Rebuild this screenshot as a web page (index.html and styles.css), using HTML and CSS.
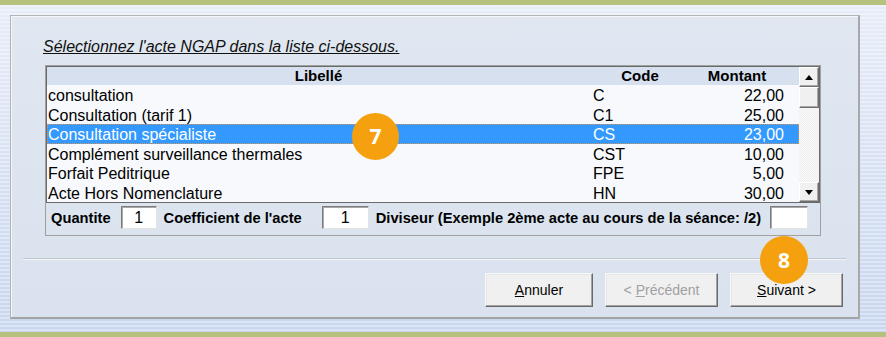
FILE: index.html
```html
<!DOCTYPE html>
<html lang="fr">
<head>
  <meta charset="UTF-8" />
  <title>Acte NGAP</title>
  <link rel="stylesheet" href="styles.css">
</head>
<body>
  <div class="band"></div>
  <div class="desktop">
    <div class="panel">
      <p class="intro">Sélectionnez l'acte NGAP dans la liste ci-dessous.</p>

      <div class="picker">
        <div class="list">
          <div class="grid">
            <div class="row head"><span>Libellé</span><span>Code</span><span>Montant</span><span></span></div>
            <div class="row"><span>consultation</span><span>C</span><span>22,00</span><span></span></div>
            <div class="row"><span>Consultation (tarif 1)</span><span>C1</span><span>25,00</span><span></span></div>
            <div class="row selected"><span>Consultation spécialiste</span><span>CS</span><span>23,00</span><span></span></div>
            <div class="row"><span>Complément surveillance thermales</span><span>CST</span><span>10,00</span><span></span></div>
            <div class="row"><span>Forfait Peditrique</span><span>FPE</span><span>5,00</span><span></span></div>
            <div class="row"><span>Acte Hors Nomenclature</span><span>HN</span><span>30,00</span><span></span></div>
          </div>
          <div class="scrollbar">
            <div class="sb-btn"><svg width="8" height="5" viewBox="0 0 8 5"><polygon points="4,0 8,5 0,5" fill="#000"/></svg></div>
            <div class="sb-btn thumb"></div>
            <div class="sb-track"></div>
            <div class="sb-btn"><svg width="8" height="5" viewBox="0 0 8 5"><polygon points="0,0 8,0 4,5" fill="#000"/></svg></div>
          </div>
        </div>
        <div class="params">
          <label class="lbl-qte">Quantite</label>
          <div class="field f-qte">1</div>
          <label class="lbl-coef">Coefficient de l'acte</label>
          <div class="field f-coef">1</div>
          <label class="lbl-div">Diviseur (Exemple 2ème acte au cours de la séance: /2)</label>
          <div class="field f-div"></div>
        </div>
      </div>

      <div class="sep"></div>

      <div class="buttons">
        <button class="btn btn-annuler"><u>A</u>nnuler</button>
        <button class="btn btn-prec" disabled>&lt; <u>P</u>récédent</button>
        <button class="btn btn-suiv"><u>S</u>uivant &gt;</button>
      </div>

      <span class="badge b7">7</span>
      <span class="badge b8">8</span>
    </div>
  </div>
  <div class="band"></div>
</body>
</html>
```

FILE: styles.css
```css
/* ---- fond et cadre ---- */
body {
  margin: 0;
  height: 337px;
  display: flex;
  flex-direction: column;
  overflow: hidden;
  font-family: 'Liberation Sans', Arial, sans-serif;
  color: #000;
}

.band {
  flex: none;
  height: 5px;
  background: #b7c17e;
}

.desktop {
  flex: 1;
  padding: 10px 26px 13px 10px;
  background:
    repeating-linear-gradient(180deg, rgba(255,255,255,0.35) 0 2px, rgba(255,255,255,0) 2px 4px),
    linear-gradient(#e6ecf8, #c8d6ef);
}

.panel {
  position: relative;
  height: 100%;
  box-sizing: border-box;
  border: 1px solid #b4b4b4;
  border-right: 2px solid #a8a8a8;
  border-bottom: 2px solid #a4a4a4;
  box-shadow: inset 1px 1px 0 #f4f6fa;
  background: linear-gradient(#e0e7f1, #d9e2ee);
  display: flex;
  flex-direction: column;
}

.intro {
  margin: 21px 0 0 32px;
  font-size: 16px;
  line-height: 19px;
  font-style: italic;
  text-decoration: underline;
  color: #111;
}

/* ---- liste ---- */
.picker {
  margin: 9px 0 0 34px;
  width: 776px;
  box-sizing: border-box;
  border: 1px solid #a0a0a0;
}

.list {
  display: flex;
  border: 1px solid #6a6a6a;
}

.grid {
  flex: 1;
  background: #f7f9fc;
}

.row {
  display: grid;
  grid-template-columns: 543px 100px 94px 1fr;
  height: 19.5px;
  line-height: 21px;
  font-size: 16px;
  white-space: nowrap;
}

.row span:nth-child(1) { padding-left: 1px; }
.row span:nth-child(2) { padding-left: 3px; }
.row span:nth-child(3) { text-align: right; }

.row.head {
  height: 18px;
  line-height: 18px;
  background: #d7e0ee;
  font-size: 15px;
  font-weight: bold;
}

.row.head span { text-align: center; padding: 0; }

.row.selected {
  background: #3399ff;
  color: #fff;
  outline: 1px dotted #d7955a;
  outline-offset: -1px;
}

.scrollbar {
  width: 20px;
  display: flex;
  flex-direction: column;
}

.sb-btn {
  height: 20px;
  box-sizing: border-box;
  background: #f0f0f0;
  border: 1px solid;
  border-color: #fff #6e6e6e #6e6e6e #fff;
  box-shadow: inset -1px -1px 0 #a8a8a8;
  display: flex;
  align-items: center;
  justify-content: center;
}

.sb-btn.thumb { height: 21px; }

.sb-track {
  flex: 1;
  background: repeating-conic-gradient(#ececec 0 25%, #fbfbfb 0 50%) 0 0 / 2px 2px;
}

/* ---- paramètres ---- */
.params {
  height: 32px;
  box-sizing: border-box;
  padding: 0 0 3px 5px;
  display: flex;
  align-items: center;
  font-size: 14.7px;
  font-weight: bold;
  white-space: nowrap;
}

.field {
  height: 23px;
  box-sizing: border-box;
  background: #fff;
  border: 1px solid;
  border-color: #7c7c7c #e4e4e4 #e4e4e4 #7c7c7c;
  box-shadow: inset 1px 1px 0 #a8a8a8;
  font-size: 16px;
  font-weight: normal;
  line-height: 21px;
  text-align: center;
}

.f-qte { width: 36px; margin: 0 7px 0 10px; }
.f-coef { width: 47px; margin: 0 7px 0 20px; }
.f-div { width: 38px; margin-left: 9px; }

/* ---- boutons ---- */
.sep {
  margin: 22px 12px 0;
  height: 1px;
  background: #c2c6cc;
  border-bottom: 1px solid #f4f6f9;
}

.buttons {
  margin-top: 13px;
  padding-right: 15px;
  display: flex;
  justify-content: flex-end;
  gap: 12px;
}

.btn {
  height: 34px;
  width: 113px;
  padding: 0;
  background: #f0f0f0;
  border: 1px solid;
  border-color: #f8f8f8 #6a6a6a #6a6a6a #f8f8f8;
  box-shadow: inset -1px -1px 0 #a3a3a3, inset 1px 1px 0 #e6e6e6;
  font-family: 'Liberation Sans', Arial, sans-serif;
  font-size: 14px;
  color: #000;
}

.btn-annuler { width: 108px; }
.btn:disabled { color: #a0a0a0; }

/* ---- repères ---- */
.badge {
  position: absolute;
  width: 47px;
  height: 47px;
  border-radius: 50%;
  background: #f5a10f;
  color: #fff;
  font-family: 'Open Sans', sans-serif;
  font-weight: bold;
  font-size: 21px;
  line-height: 47px;
  text-align: center;
}

.b7 { left: 341px; top: 97px; }
.b8 { left: 749px; top: 220px; width: 48px; height: 48px; line-height: 48px; }
```
